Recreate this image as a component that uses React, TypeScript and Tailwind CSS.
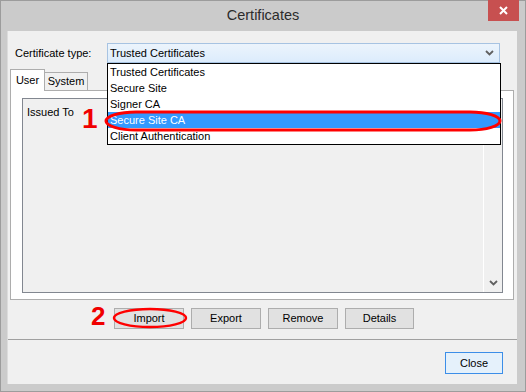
import type { ReactNode } from "react";

const ITEMS = ["Trusted Certificates", "Secure Site", "Signer CA", "Secure Site CA", "Client Authentication"];

function Chevron({ className }: { className?: string }) {
  return (
    <svg width="9" height="6" viewBox="0 0 9 6" className={className}>
      <path d="M1 1 L4.5 4.5 L8 1" fill="none" stroke="#606060" strokeWidth="1.8" />
    </svg>
  );
}

function Btn({ children, w }: { children: ReactNode; w: string }) {
  return (
    <div className={`${w} h-[21px] flex items-center justify-center border border-[#adadad] bg-[#e1e1e1] text-[11px] text-black`}>
      {children}
    </div>
  );
}

export default function App() {
  return (
    <div className="relative w-[526px] h-[392px] bg-[#cbcbcb] border border-[#9c9c9c] font-['Liberation_Sans',Arial,sans-serif]">
      {/* title bar */}
      <div className="relative h-[30px] flex items-center justify-center">
        <span className="text-[14.5px] text-[#2b2b2b]">Certificates</span>
        <div className="absolute right-[6px] top-[-1px] w-[31px] h-[21px] bg-[#c75050] flex items-center justify-center">
          <svg width="9" height="9" viewBox="0 0 9 9">
            <path d="M1 1 L8 8 M8 1 L1 8" stroke="white" strokeWidth="2" />
          </svg>
        </div>
      </div>

      {/* client area */}
      <div className="ml-[6px] w-[510px] h-[353px] bg-[#f0f0f0] border-l border-[#dcdcdc] flex flex-col">
        <div className="h-[309px] border-b border-[#a0a0a0] flex flex-col pt-[12px]">
          <div className="flex items-center h-[20px]">
            <span className="ml-[7px] w-[92px] text-[11px] text-black">Certificate type:</span>
            <div className="w-[393px] h-[20px] border border-[#a7c3e2] bg-gradient-to-b from-[#ecf4fc] to-[#dcecfc] flex items-center justify-between pl-[2px] pr-[5px]">
              <span className="text-[11px] text-black">Trusted Certificates</span>
              <Chevron />
            </div>
          </div>

          {/* tabs */}
          <div className="mt-[6px] ml-[2px] flex items-end h-[21px]">
            <div className="relative z-10 w-[35px] h-[22px] -mb-px bg-white border border-b-0 border-[#adadad] flex items-center justify-center text-[11px] text-black">
              User
            </div>
            <div className="w-[43px] h-[18px] bg-[#f0f0f0] border border-l-0 border-b-0 border-[#adadad] flex items-center justify-center text-[11px] text-black">
              System
            </div>
          </div>
          <div className="ml-[2px] w-[504px] h-[210px] bg-white border border-[#adadad] pt-[7px] pl-[11px]">
            <div className="w-[481px] h-[195px] border border-[#828790] bg-[#f0f0f0] flex">
              <div className="flex-1 pt-[5px] pl-[4px] text-[11px] text-black">Issued To</div>
              <div className="w-[19px] border-l border-white flex items-end justify-center pb-[6px]">
                <Chevron />
              </div>
            </div>
          </div>

          {/* buttons */}
          <div className="mt-[8px] ml-[106px] flex gap-[7px]">
            <Btn w="w-[70px]">Import</Btn>
            <Btn w="w-[70px]">Export</Btn>
            <Btn w="w-[70px]">Remove</Btn>
            <Btn w="w-[69px]">Details</Btn>
          </div>
        </div>

        <div className="flex justify-end pr-[14px] pt-[12px]">
          <div className="w-[58px] h-[22px] border border-[#3c8ee8] bg-[#e5f1fb] flex items-center justify-center text-[11px] text-black">
            Close
          </div>
        </div>
      </div>

      {/* open dropdown list */}
      <div className="absolute left-[106px] top-[62px] w-[394px] border border-black bg-white">
        {ITEMS.map((item, i) => (
          <div
            key={item}
            className={`h-[16px] pl-[2px] flex items-center text-[11px] ${i === 3 ? "bg-[#3399ff] text-white" : "text-black"}`}
          >
            {item}
          </div>
        ))}
      </div>

      {/* annotations */}
      <span className="absolute left-[81px] top-[104px] text-[28px] leading-none font-bold text-[#f00000]">1</span>
      <span className="absolute left-[90px] top-[302px] text-[26px] leading-none font-bold text-[#f00000]">2</span>
      <svg className="absolute left-0 top-0" width="526" height="392">
        <rect x="105" y="111" width="394" height="18" rx="30" ry="9" fill="none" stroke="#ff0000" strokeWidth="3" />
        <ellipse cx="149" cy="317" rx="36" ry="9" fill="none" stroke="#ff0000" strokeWidth="2.5" />
      </svg>
    </div>
  );
}
